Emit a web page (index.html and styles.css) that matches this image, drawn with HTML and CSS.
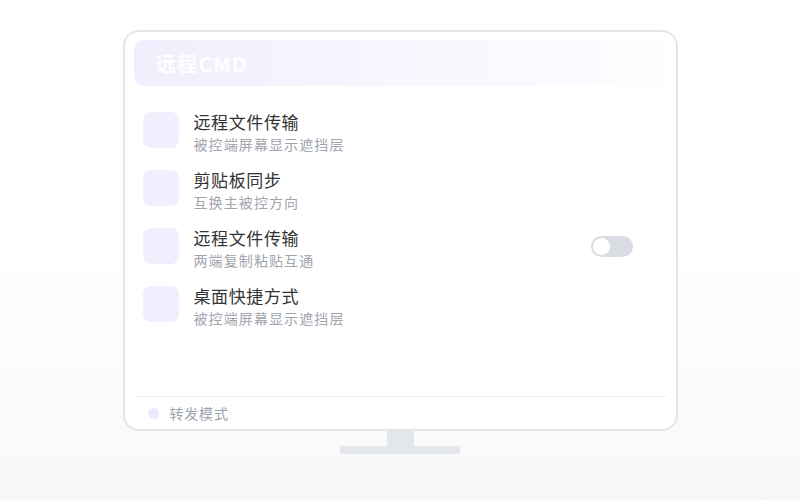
FILE: index.html
```html
<!DOCTYPE html>
<html lang="zh">
<head>
<meta charset="utf-8">
<link rel="stylesheet" href="styles.css">
</head>
<body>
<div class="stage">
  <div class="monitor">
    <div class="header"><span class="title">远程CMD</span></div>
    <div class="list">
      <div class="row">
        <div class="icon"></div>
        <div class="texts"><div class="name">远程文件传输</div><div class="desc">被控端屏幕显示遮挡层</div></div>
      </div>
      <div class="row">
        <div class="icon"></div>
        <div class="texts"><div class="name">剪贴板同步</div><div class="desc">互换主被控方向</div></div>
      </div>
      <div class="row">
        <div class="icon"></div>
        <div class="texts"><div class="name">远程文件传输</div><div class="desc">两端复制粘贴互通</div></div>
        <div class="toggle"><div class="knob"></div></div>
      </div>
      <div class="row">
        <div class="icon"></div>
        <div class="texts"><div class="name">桌面快捷方式</div><div class="desc">被控端屏幕显示遮挡层</div></div>
      </div>
    </div>
    <div class="footer"><span class="dot"></span><span class="mode">转发模式</span></div>
  </div>
  <div class="neck"></div>
  <div class="base"></div>
</div>
</body>
</html>
```

FILE: styles.css
```css
html, body {
  margin: 0;
  padding: 0;
  background: #ffffff;
  font-family: "Noto Sans CJK SC", "Noto Sans", sans-serif;
}
.stage {
  width: 800px;
  height: 500px;
  padding-top: 30px;
  box-sizing: border-box;
  display: flex;
  flex-direction: column;
  align-items: center;
  background: linear-gradient(180deg, #ffffff 0%, #ffffff 48%, #f8f8f9 100%);
}
.monitor {
  width: 555px;
  height: 401px;
  box-sizing: border-box;
  border: 2px solid #e4e6ea;
  border-radius: 16px;
  padding: 8px 9px 0 9px;
  display: flex;
  flex-direction: column;
  background: #fff;
}
.header {
  height: 46px;
  border-radius: 10px;
  background: linear-gradient(90deg, #f1eefd 0%, #f7f5fe 45%, #fdfdff 100%);
  display: flex;
  align-items: center;
  padding-left: 22px;
}
.title {
  color: #ffffff;
  font-size: 20px;
  font-weight: 700;
  letter-spacing: 1.6px;
}
.list {
  flex: 1;
  padding: 26px 34px 0 9px;
  display: flex;
  flex-direction: column;
  gap: 16px;
}
.row {
  height: 42px;
  display: flex;
  align-items: flex-start;
}
.icon {
  width: 36px;
  height: 36px;
  border-radius: 8px;
  background: #f1effd;
  flex: none;
}
.texts {
  margin-left: 15px;
  flex: 1;
}
.name {
  font-size: 17px;
  line-height: 20px;
  letter-spacing: 0.6px;
  color: #333333;
}
.desc {
  margin-top: 2px;
  font-size: 14px;
  line-height: 20px;
  letter-spacing: 1.1px;
  color: #a0a5ae;
}
.toggle {
  align-self: center;
  margin-top: -6px;
  width: 42px;
  height: 21px;
  border-radius: 11px;
  background: #d9dce3;
  display: flex;
  align-items: center;
  padding-left: 2px;
  box-sizing: border-box;
}
.knob {
  width: 17px;
  height: 17px;
  border-radius: 50%;
  background: #ffffff;
}
.footer {
  height: 32px;
  border-top: 1px solid #eef0f3;
  display: flex;
  align-items: center;
  padding-left: 14px;
}
.dot {
  width: 11px;
  height: 11px;
  border-radius: 50%;
  background: #eceafc;
}
.mode {
  margin-left: 11px;
  font-size: 14px;
  letter-spacing: 0.8px;
  color: #9ca3af;
}
.neck {
  width: 27px;
  height: 15px;
  background: #e3e6eb;
}
.base {
  width: 120px;
  height: 8px;
  background: #e3e6eb;
}
```
